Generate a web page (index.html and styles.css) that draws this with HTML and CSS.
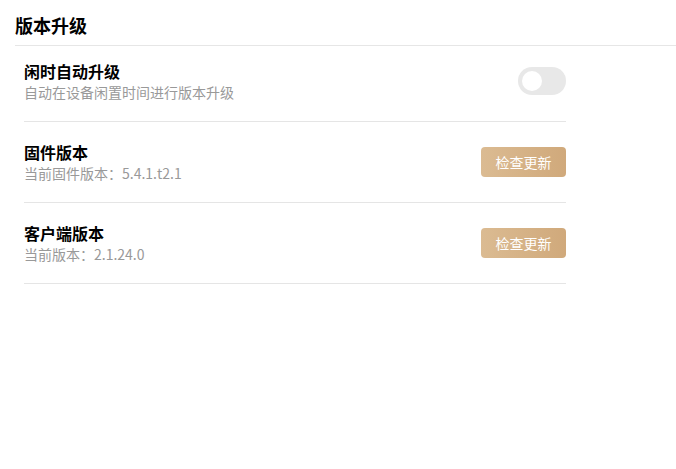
FILE: index.html
```html
<!DOCTYPE html>
<html lang="zh-CN">
<head>
<meta charset="utf-8">
<title>版本升级</title>
<link rel="stylesheet" href="styles.css">
</head>
<body>
<div class="page">
  <div class="header">版本升级</div>
  <div class="list">
    <div class="row">
      <div class="info">
        <div class="title">闲时自动升级</div>
        <div class="desc">自动在设备闲置时间进行版本升级</div>
      </div>
      <div class="switch"><span class="knob"></span></div>
    </div>
    <div class="row">
      <div class="info">
        <div class="title">固件版本</div>
        <div class="desc">当前固件版本：5.4.1.t2.1</div>
      </div>
      <button class="btn">检查更新</button>
    </div>
    <div class="row">
      <div class="info">
        <div class="title">客户端版本</div>
        <div class="desc">当前版本：2.1.24.0</div>
      </div>
      <button class="btn">检查更新</button>
    </div>
  </div>
</div>
</body>
</html>
```
FILE: styles.css
```css
html, body {
  margin: 0;
  padding: 0;
  background: #fff;
}
body {
  font-family: "Microsoft YaHei", "Noto Sans CJK SC", "Noto Sans", sans-serif;
  color: #000;
}
.page {
  width: 676px;
}
.header {
  margin-left: 15px;
  height: 46px;
  box-sizing: border-box;
  padding-top: 13px;
  line-height: 24px;
  font-size: 18px;
  font-weight: bold;
  border-bottom: 1px solid #e6e6e6;
}
.list {
  margin-left: 24px;
  width: 542px;
}
.row {
  display: flex;
  align-items: center;
  justify-content: space-between;
  padding: 19px 0;
  border-bottom: 1px solid #e5e5e5;
}
.row:first-child {
  padding-top: 14px;
}
.title {
  font-size: 16px;
  font-weight: bold;
  line-height: 22px;
  color: #000;
}
.desc {
  font-size: 14px;
  line-height: 20px;
  color: #999;
}
.switch {
  position: relative;
  width: 48px;
  height: 28px;
  border-radius: 14px;
  background: #e8e8e8;
}
.knob {
  position: absolute;
  left: 4px;
  top: 4px;
  width: 20px;
  height: 20px;
  border-radius: 50%;
  background: #fff;
}
.btn {
  width: 85px;
  height: 30px;
  border: none;
  border-radius: 4px;
  background: linear-gradient(90deg, #dbbb92 0%, #d0a97b 100%);
  color: #fff;
  font-family: inherit;
  font-size: 14px;
  padding: 0;
}
```
